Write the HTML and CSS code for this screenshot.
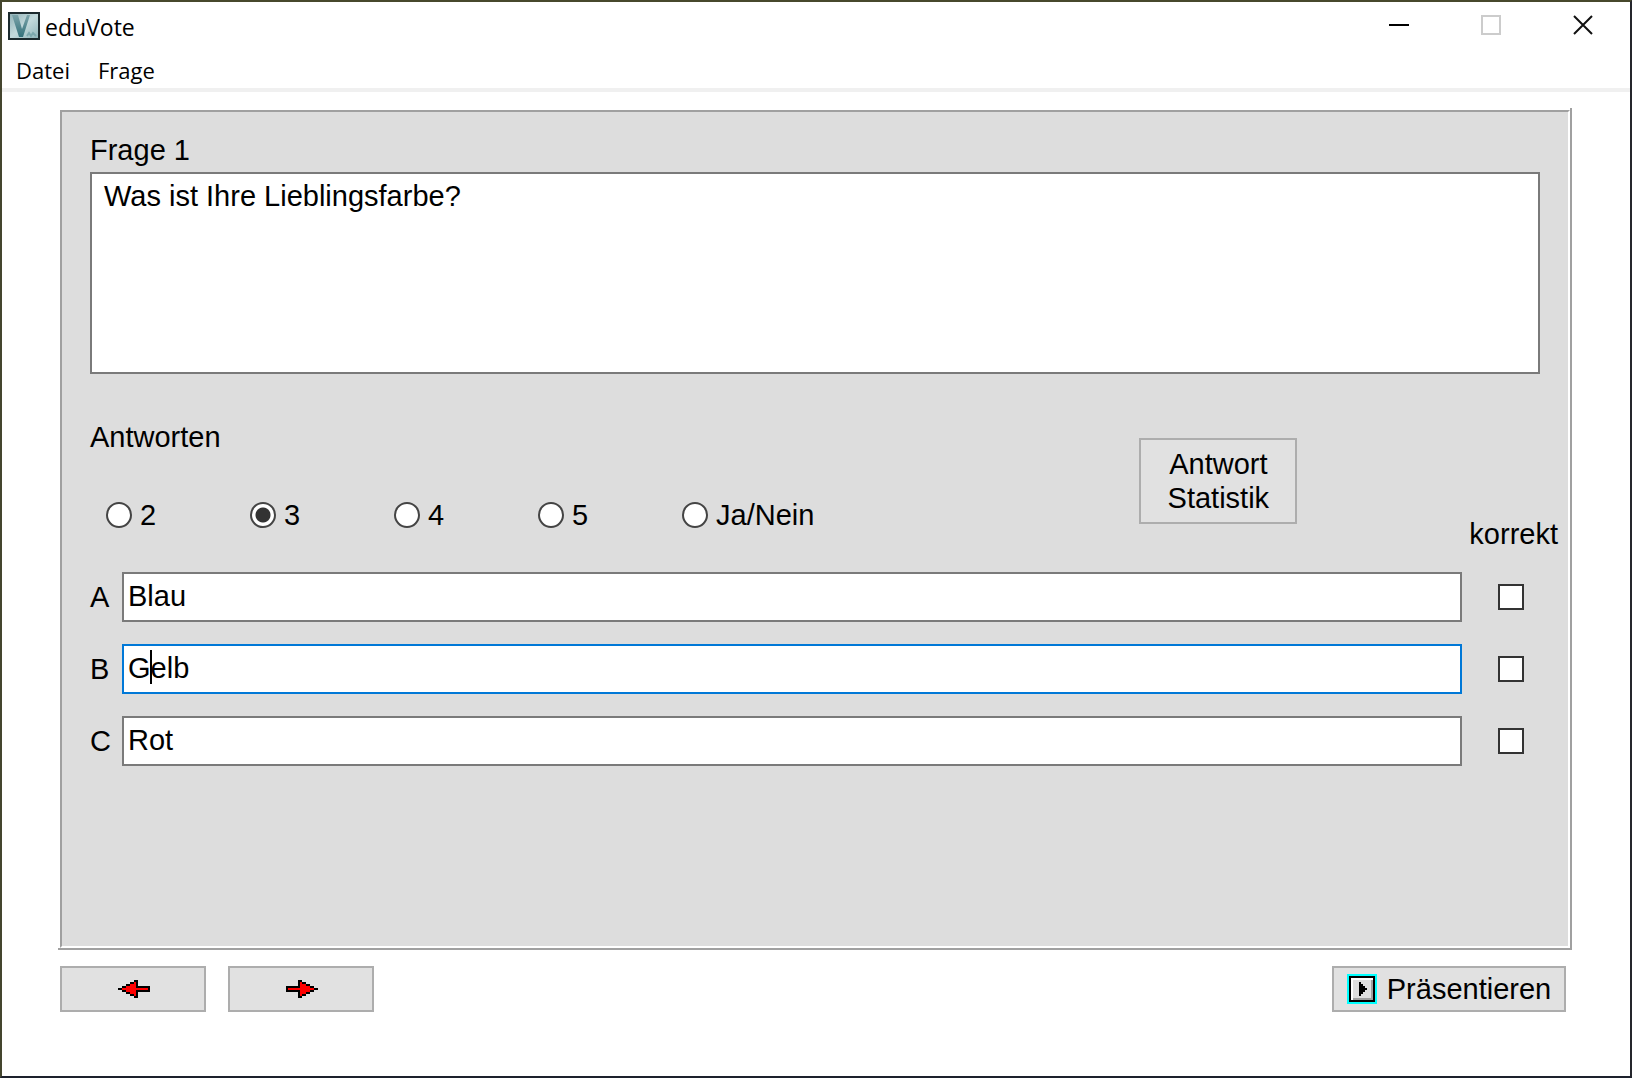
FILE: index.html
```html
<!DOCTYPE html>
<html lang="de">
<head>
  <meta charset="UTF-8">
  <meta name="viewport" content="width=device-width, initial-scale=1.0">
  <title>eduVote</title>
  <link rel="stylesheet" href="styles.css">
</head>
<body>
  <div class="window">
    <header class="titlebar">
      <svg class="logo" width="32" height="28" viewBox="0 0 32 28">
        <defs>
          <linearGradient id="logoBg" x1="0" y1="0" x2="1" y2="1">
            <stop offset="0" stop-color="#8fb0b5"/>
            <stop offset="0.5" stop-color="#c3dadc"/>
            <stop offset="1" stop-color="#8db3b8"/>
          </linearGradient>
          <linearGradient id="logoV" x1="0" y1="0" x2="0" y2="1">
            <stop offset="0" stop-color="#7ba3a9"/>
            <stop offset="1" stop-color="#34727b"/>
          </linearGradient>
        </defs>
        <rect x="1" y="1" width="30" height="26" fill="url(#logoBg)" stroke="#1c2a2e" stroke-width="2"/>
        <path d="M4 3h6l4 14 5-14h3l-7 22h-4z" fill="url(#logoV)"/>
        <path d="M19 24l2-3 2 3 2-3 3 3" fill="none" stroke="#7ca8ad" stroke-width="2"/>
      </svg>
      <h1 class="title">eduVote</h1>
      <div class="controls">
        <button type="button" class="control" aria-label="Minimieren">
          <svg width="20" height="20"><path d="M0 10h20" stroke="#000" stroke-width="2"/></svg>
        </button>
        <button type="button" class="control" aria-label="Maximieren" disabled>
          <svg width="20" height="20"><rect x="1" y="1" width="18" height="18" fill="none" stroke="#ccc" stroke-width="2"/></svg>
        </button>
        <button type="button" class="control" aria-label="Schließen">
          <svg width="20" height="20"><path d="M1 1l18 18M19 1L1 19" stroke="#111" stroke-width="2"/></svg>
        </button>
      </div>
    </header>

    <nav class="menubar">
      <button type="button" class="menu-item">Datei</button>
      <button type="button" class="menu-item">Frage</button>
    </nav>

    <main class="content">
      <div class="frame">
        <form class="panel">
          <label class="label" for="question">Frage 1</label>
          <textarea class="field question" id="question">Was ist Ihre Lieblingsfarbe?</textarea>

          <div class="options">
            <fieldset class="count">
              <legend class="label">Antworten</legend>
              <div class="radios">
                <label class="radio"><input type="radio" name="count">2</label>
                <label class="radio"><input type="radio" name="count" checked>3</label>
                <label class="radio"><input type="radio" name="count">4</label>
                <label class="radio"><input type="radio" name="count">5</label>
                <label class="radio"><input type="radio" name="count">Ja/Nein</label>
              </div>
            </fieldset>
            <button type="button" class="btn statistics">Antwort<br>Statistik</button>
            <span class="correct-title" id="correct">korrekt</span>
          </div>

          <div class="answers">
            <div class="answer">
              <label for="answerA">A</label>
              <div class="answer-box"><input type="text" class="field" id="answerA" value="Blau"></div>
              <input type="checkbox" class="check" aria-labelledby="correct">
            </div>
            <div class="answer">
              <label for="answerB">B</label>
              <div class="answer-box active"><input type="text" class="field" id="answerB" value="Gelb"><span class="caret"></span></div>
              <input type="checkbox" class="check" aria-labelledby="correct">
            </div>
            <div class="answer">
              <label for="answerC">C</label>
              <div class="answer-box"><input type="text" class="field" id="answerC" value="Rot"></div>
              <input type="checkbox" class="check" aria-labelledby="correct">
            </div>
          </div>
        </form>
      </div>

      <footer class="actions">
        <button type="button" class="btn step" aria-label="Zurück">
          <svg width="32" height="18" viewBox="0 0 16 9" shape-rendering="crispEdges">
            <path d="M0 4h2v-1h2v-1h2v-1h2v-1h2v3h6v3h-6v3h-2v-1h-2v-1h-2v-1h-2v-1h-2z" fill="#000"/>
            <path d="M2 4h2v-1h2v-1h2v-1h1v3h6v1h-6v3h-1v-1h-2v-1h-2v-1h-2z" fill="#f00"/>
          </svg>
        </button>
        <button type="button" class="btn step" aria-label="Weiter">
          <svg width="32" height="18" viewBox="0 0 16 9" shape-rendering="crispEdges">
            <path d="M16 4h-2v-1h-2v-1h-2v-1h-2v-1h-2v3h-6v3h6v3h2v-1h2v-1h2v-1h2v-1h2z" fill="#000"/>
            <path d="M14 4h-2v-1h-2v-1h-2v-1h-1v3h-6v1h6v3h1v-1h2v-1h2v-1h2z" fill="#f00"/>
          </svg>
        </button>
        <button type="button" class="btn present">
          <svg width="30" height="30" viewBox="0 0 15 15" shape-rendering="crispEdges">
            <path d="M0 0h15v15h-15z" fill="#0ff"/>
            <path d="M1 1h13v13h-13z" fill="#000"/>
            <path d="M2 2h11v11h-11z" fill="#fff"/>
            <path d="M3 3h9v9h-9z" fill="#dfdfdf"/>
            <path d="M12 3h1v10h-10v-1h9z" fill="#a0a0a0"/>
            <path d="M6 4h1v1h1v1h1v1h1v1h-1v1h-1v1h-1v1h-1z" fill="#000"/>
          </svg>
          Präsentieren
        </button>
      </footer>
    </main>
  </div>
</body>
</html>
```
FILE: styles.css
```css
* {
  box-sizing: border-box;
}
html, body {
  margin: 0;
  height: 100%;
}
body {
  font: 29px/34px Arial, "Liberation Sans", sans-serif;
  color: #000;
  background-color: #fff;
}
button, input, textarea {
  margin: 0;
  font: inherit;
  color: inherit;
  border-radius: 0;
}
svg {
  display: block;
  flex: none;
}

/* window */
.window {
  display: flex;
  flex-direction: column;
  min-height: 100%;
  border: 2px solid;
  border-color: #47482c #25262c #1d212d #44452e;
}
.titlebar {
  display: flex;
  align-items: center;
  height: 48px;
  padding-left: 6px;
  font-family: "Segoe UI", "Open Sans", sans-serif;
}
.title {
  margin: 0 0 0 5px;
  padding-top: 2px;
  font-size: 23px;
  font-weight: 400;
}
.controls {
  display: flex;
  margin-left: auto;
}
.control {
  display: flex;
  justify-content: center;
  align-items: center;
  width: 92px;
  height: 48px;
  padding: 0 2px 2px 0;
  border: 0;
  background: none;
}
.menubar {
  display: flex;
  height: 42px;
  border-bottom: 4px solid #f0f0f0;
}
.menu-item {
  padding: 2px 14px 0;
  border: 0;
  background: none;
  font-family: "Segoe UI", "Open Sans", sans-serif;
  font-size: 22px;
}

/* panel */
.content {
  display: flex;
  flex: 1;
  flex-direction: column;
  padding: 16px 58px 64px 56px;
}
.frame {
  display: flex;
  flex: 1;
  padding: 2px 0 0 2px;
  border: solid #a0a0a0;
  border-width: 0 2px 2px 0;
}
.panel {
  display: flex;
  flex: 1;
  flex-direction: column;
  padding: 21px 28px;
  border: 2px solid;
  border-color: #a0a0a0 #fff #fff #a0a0a0;
  background-color: #ddd;
}
.label {
  padding: 0;
}
.field {
  display: block;
  width: 100%;
  border: 2px solid #7a7a7a;
  outline: 0;
  background-color: #fff;
}
.question {
  height: 202px;
  margin-top: 5px;
  padding: 5px 12px;
  resize: none;
}
.options {
  display: flex;
  align-items: flex-start;
  height: 152px;
  margin-top: 46px;
}
.count {
  margin: 0 auto 0 0;
  padding: 0;
  border: 0;
}
.radios {
  display: flex;
  padding: 44px 0 0 16px;
}
.radio {
  display: flex;
  align-items: center;
  gap: 8px;
  min-width: 144px;
}
.radio input {
  appearance: none;
  width: 26px;
  height: 26px;
  border: 2px solid #444;
  border-radius: 50%;
  background-color: #fff;
}
.radio input:checked {
  background-image: radial-gradient(circle, #333 7px, #fff 8px);
}
.btn {
  display: flex;
  justify-content: center;
  align-items: center;
  padding: 0;
  border: 2px solid #adadad;
  background-color: #e1e1e1;
}
.statistics {
  width: 158px;
  height: 86px;
  margin: 18px 172px 0 0;
}
.correct-title {
  margin: 97px -18px 0 0;
}

/* answers */
.answers {
  display: flex;
  flex-direction: column;
  gap: 22px;
}
.answer {
  display: grid;
  grid-template-columns: 32px 1fr 26px;
  align-items: center;
  padding-right: 16px;
}
.answer-box {
  position: relative;
  margin-right: 36px;
}
.answer-box .field {
  height: 50px;
  padding: 0 4px 2px;
}
.active .field {
  border-color: #0078d7;
}
.caret {
  position: absolute;
  top: 6px;
  left: 28px;
  width: 2px;
  height: 34px;
  background-color: #000;
}
.check {
  appearance: none;
  width: 26px;
  height: 26px;
  border: 2px solid #333;
  background-color: #fff;
}

/* bottom buttons */
.actions {
  display: flex;
  gap: 22px;
  padding: 16px 6px 0 2px;
}
.actions .btn {
  height: 46px;
}
.step {
  width: 146px;
  padding-left: 2px;
}
.present {
  gap: 10px;
  width: 234px;
  margin-left: auto;
}
```
